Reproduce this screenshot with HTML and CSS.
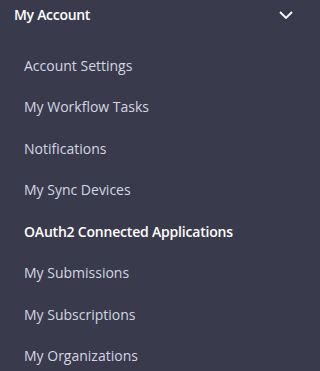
FILE: index.html
```html
<!DOCTYPE html>
<html>
<head>
<meta charset="utf-8">
<link rel="stylesheet" href="styles.css">
</head>
<body>
<nav class="menu">
  <div class="menu-header">
    <span class="menu-title">My Account</span>
    <svg class="chevron" width="14" height="8" viewBox="0 0 14 8"><path d="M1 1 L7 7 L13 1" fill="none" stroke="#ffffff" stroke-width="1.8"/></svg>
  </div>
  <ul class="menu-list">
    <li class="menu-item">Account Settings</li>
    <li class="menu-item">My Workflow Tasks</li>
    <li class="menu-item">Notifications</li>
    <li class="menu-item">My Sync Devices</li>
    <li class="menu-item active">OAuth2 Connected Applications</li>
    <li class="menu-item">My Submissions</li>
    <li class="menu-item">My Subscriptions</li>
    <li class="menu-item">My Organizations</li>
  </ul>
</nav>
</body>
</html>
```
FILE: styles.css
```css
html, body {
  margin: 0;
  padding: 0;
  background: #393a4b;
}
.menu {
  width: 300px;
  height: 371px;
  background: #393a4b;
  font-family: "Open Sans", "Noto Sans", sans-serif;
  font-size: 14px;
  overflow: hidden;
}
.menu-header {
  display: flex;
  align-items: center;
  justify-content: space-between;
  height: 29px;
  padding: 0 7px 0 14px;
}
.menu-title {
  color: #ffffff;
  font-weight: 600;
  letter-spacing: -0.3px;
}
.chevron {
  display: block;
}
.menu-list {
  list-style: none;
  margin: 0;
  padding: 16px 0 0 0;
}
.menu-item {
  color: #d3d7e3;
  padding: 10px 0 10px 24px;
  line-height: 21.43px;
}
.menu-item.active {
  color: #ffffff;
  font-weight: 600;
  letter-spacing: -0.2px;
}
```
